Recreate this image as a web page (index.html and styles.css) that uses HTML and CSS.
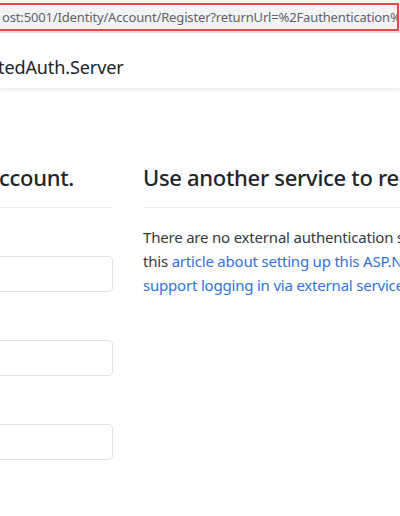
FILE: index.html
```html
<!DOCTYPE html>
<html lang="en">
<head>
<meta charset="utf-8">
<title>Register</title>
<link rel="stylesheet" href="styles.css">
</head>
<body>
<div class="addr">
  <div class="addr-field"><span class="addr-text">ost:5001/Identity/Account/Register?returnUrl=%2Fauthentication%</span></div>
</div>
<header class="navbar">
  <span class="brand">tedAuth.Server</span>
</header>
<main class="container">
  <section class="col-left">
    <h4 class="title">ccount.</h4>
    <hr class="rule">
    <div class="form-group"><input class="form-control" type="email"></div>
    <div class="form-group"><input class="form-control" type="password"></div>
    <div class="form-group"><input class="form-control" type="password"></div>
  </section>
  <section class="col-right">
    <h4 class="title">Use another service to register.</h4>
    <hr class="rule">
    <p class="text">There are no external authentication services configured. See<br>this <a class="link" href="#">article about setting up this ASP.NET application to<br>support logging in via external services</a>.</p>
  </section>
</main>
</body>
</html>
```
FILE: styles.css
```css
html, body {
  margin: 0;
  padding: 0;
  width: 400px;
  height: 516px;
  overflow: hidden;
  background: #ffffff;
  font-family: "Noto Sans", "Open Sans", sans-serif;
  color: #212529;
}

.addr {
  height: 33px;
  background: #f1f3f4;
  border-bottom: 2px solid #dfe1e5;
  padding-top: 3px;
  box-sizing: border-box;
  overflow: hidden;
}

.addr-field {
  margin-left: -10px;
  margin-right: 1px;
  height: 28px;
  border: 2px solid #e8474a;
  box-sizing: border-box;
  display: flex;
  align-items: center;
  padding-left: 10px;
  white-space: nowrap;
  overflow: hidden;
}

.addr-text {
  font-size: 13px;
  color: #5f6368;
  letter-spacing: -0.15px;
}

.navbar {
  height: 55px;
  margin-top: 1px;
  padding-top: 11px;
  box-sizing: border-box;
  background: #ffffff;
  box-shadow: 0 2px 4px rgba(0, 0, 0, 0.06);
  border-bottom: 1px solid #eeeeee;
  display: flex;
  align-items: center;
  white-space: nowrap;
  overflow: hidden;
}

.brand {
  font-size: 18px;
  letter-spacing: -0.1px;
  color: #212529;
  margin-left: -2px;
}

.container {
  display: grid;
  grid-template-columns: 113px 1fr;
  column-gap: 30px;
  padding-top: 74px;
}

.col-left, .col-right {
  min-width: 0;
  white-space: nowrap;
}

.col-left .title {
  margin-left: -1px;
}

.title {
  font-size: 22px;
  font-weight: 500;
  letter-spacing: -0.3px;
  line-height: 28px;
  margin: 0 0 7px 0;
  color: #212529;
  overflow: hidden;
}

.rule {
  border: 0;
  border-top: 1px solid #e9ecef;
  margin: 16px 0;
  width: 100%;
}

.col-left .rule {
  margin-left: -20px;
  width: calc(100% + 20px);
}

.form-group {
  padding-top: 32px;
  margin-bottom: 16px;
  margin-left: -20px;
}

.form-control {
  display: block;
  width: 133px;
  height: 36px;
  box-sizing: border-box;
  border: 1px solid #dfe2e6;
  border-radius: 4px;
  background: #ffffff;
  padding: 0;
  margin: 0;
}

.text {
  font-size: 15px;
  letter-spacing: -0.2px;
  line-height: 24px;
  margin: 0;
  padding-top: 1px;
  color: #343a40;
  white-space: nowrap;
}

.link {
  color: #2f73db;
  text-decoration: none;
}
```
